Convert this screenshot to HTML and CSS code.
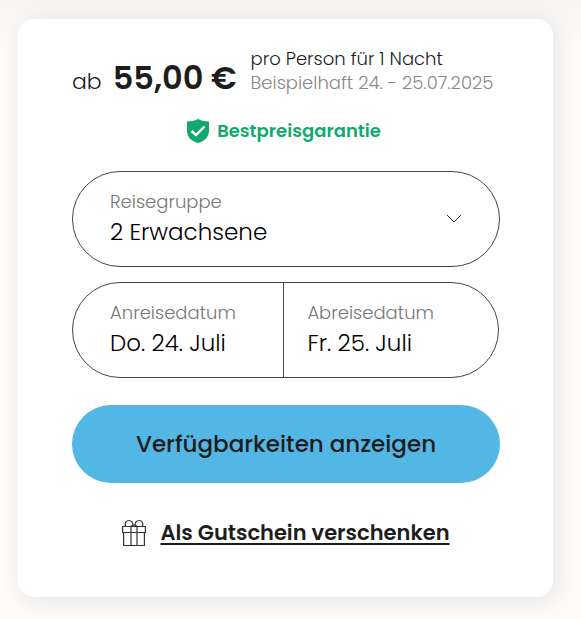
FILE: index.html
```
<!DOCTYPE html>
<html lang="de">
<head>
    <meta charset="UTF-8">
    <meta name="viewport" content="width=device-width, initial-scale=1.0">
    <title>Verfügbarkeiten</title>
    <link rel="stylesheet" href="styles.css">
</head>
<body>
    <form class="booking-card">
        <div class="price">
            <p class="price-amount"><span class="price-from">ab</span> <strong>55,00 €</strong></p>
            <div class="price-info">
                <p>pro Person für 1 Nacht</p>
                <p class="price-example">Beispielhaft 24. - 25.07.2025</p>
            </div>
        </div>

        <p class="guarantee">
            <svg class="shield" width="22" height="24" viewBox="0 0 22 24" aria-hidden="true">
                <path d="M11 0Q15.500 2.500 22 2.500V11.500C22 18.500 17.500 22 11 24C4.500 22 0 18.500 0 11.500V2.500Q6.500 2.500 11 0Z" fill="#0faa6b"/>
                <path d="M4.500 12L9 16L17.500 7.500" fill="none" stroke="#fff" stroke-width="2.400"/>
            </svg>
            Bestpreisgarantie
        </p>

        <div class="field group-field">
            <div class="field-text">
                <label for="group">Reisegruppe</label>
                <select id="group">
                    <option>2 Erwachsene</option>
                </select>
            </div>
            <svg class="chevron" width="16" height="9" viewBox="0 0 16 9" aria-hidden="true">
                <path d="M1 1L8 8L15 1" fill="none" stroke="#333" stroke-width="1"/>
            </svg>
        </div>

        <div class="field date-fields">
            <div class="date">
                <label for="arrival">Anreisedatum</label>
                <input type="text" id="arrival" value="Do. 24. Juli" readonly>
            </div>
            <div class="date">
                <label for="departure">Abreisedatum</label>
                <input type="text" id="departure" value="Fr. 25. Juli" readonly>
            </div>
        </div>

        <button type="submit" class="submit">Verfügbarkeiten anzeigen</button>

        <div class="voucher">
            <svg width="24" height="28" viewBox="0 0 24 28" fill="none" stroke="#333" stroke-width="1.200" aria-hidden="true">
                <path d="M0.600 7.500H23.400V13.500H0.600ZM1.600 13.500V26.500H22.400V13.500M9 7.500V26.500M15 7.500V26.500"/>
                <path d="M3.500 7C2.500 4 4 1.500 7 1.500C9.500 1.500 11 3.500 11 7M13 7C13 3.500 14.500 1.500 17 1.500C20 1.500 21.500 4 20.500 7M9 7.500C10 5.500 14 5.500 15 7.500"/>
            </svg>
            <a href="#">Als Gutschein verschenken</a>
        </div>
    </form>
</body>
</html>
```
FILE: styles.css
```
* {
    box-sizing: border-box;
}
body {
    margin: 0;
    padding: 19px 28px 22px 18px;
    font-family: Poppins, Inter, sans-serif;
    font-weight: 300;
    color: #1d1d1d;
    background: linear-gradient(#f5f4f3, #fdfcfa 48px);
}
p {
    margin: 0;
}
.booking-card {
    padding: 28px 53px 48px 54px;
    background-color: white;
    border-radius: 16px;
    box-shadow: 4px 4px 24px rgba(0, 0, 0, 0.1);
}
.price {
    display: flex;
    align-items: flex-start;
    gap: 14px;
    white-space: nowrap;
}
.price-amount {
    display: flex;
    align-items: baseline;
    gap: 11px;
    padding-top: 12px;
    font-size: 32px;
    line-height: 38px;
}
.price-amount strong {
    font-weight: 600;
}
.price-from {
    font-size: 22px;
}
.price-info {
    font-size: 18px;
    line-height: 24px;
}
.price-example {
    color: #888;
}
.guarantee {
    display: flex;
    align-items: center;
    justify-content: center;
    gap: 8px;
    margin: 17px 4px 27px 0;
    font-size: 18px;
    line-height: 26px;
    font-weight: 600;
    color: #0faa6b;
}
.field {
    display: flex;
    border: 1px solid #444;
    border-radius: 48px;
}
.group-field {
    align-items: center;
    padding: 16px 37px 18px;
}
.field-text {
    flex: 1;
}
.field label {
    display: block;
    font-size: 18px;
    line-height: 28px;
    color: #777;
}
.field select, .field input {
    display: block;
    width: 100%;
    height: 32px;
    padding: 0;
    border: none;
    background: none;
    appearance: none;
    font-family: inherit;
    font-size: 23px;
    font-weight: 300;
    color: black;
}
.date-fields {
    display: grid;
    grid-template-columns: 49.5% 1fr;
    margin: 15px 1px 0 0;
}
.date {
    padding: 16px 23px 18px 37px;
}
.date + .date {
    border-left: 1px solid #444;
    padding-left: 23px;
}
.submit {
    display: block;
    width: 100%;
    margin-top: 27px;
    padding: 22px;
    border: none;
    border-radius: 39px;
    background-color: #52b7e4;
    color: #1d1d1d;
    font-family: inherit;
    font-size: 23px;
    line-height: 34px;
    font-weight: 500;
    cursor: pointer;
}
.voucher {
    display: flex;
    align-items: center;
    justify-content: center;
    gap: 14px;
    margin-top: 34px;
}
.voucher a {
    font-size: 21px;
    line-height: 32px;
    font-weight: 600;
    color: #1d1d1d;
    text-decoration-thickness: 2px;
    text-underline-offset: 3px;
}
```
